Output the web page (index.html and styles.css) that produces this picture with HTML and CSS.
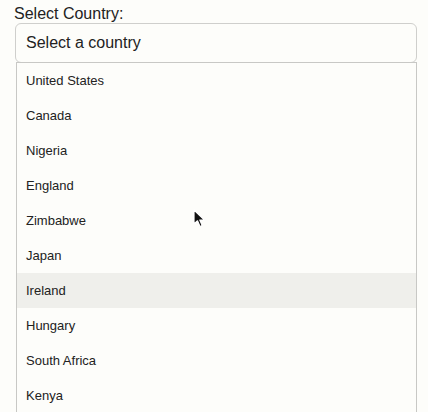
FILE: index.html
```html
<!DOCTYPE html>
<html>
<head>
<meta charset="utf-8">
<link rel="stylesheet" href="styles.css">
</head>
<body>
<div class="wrap">
  <label class="label">Select Country:</label>
  <div class="select">Select a country</div>
  <ul class="list">
    <li>United States</li>
    <li>Canada</li>
    <li>Nigeria</li>
    <li>England</li>
    <li>Zimbabwe</li>
    <li>Japan</li>
    <li class="hover">Ireland</li>
    <li>Hungary</li>
    <li>South Africa</li>
    <li>Kenya</li>
    <li>Ghana</li>
  </ul>
</div>
<svg class="cursor" width="14" height="20" viewBox="0 0 14 20">
  <path d="M1 1 L1 15 L4.5 11.8 L7 17.5 L9.2 16.5 L6.8 11 L11.5 11 Z" fill="#111" stroke="#fff" stroke-width="1.2" stroke-linejoin="round"/>
</svg>
</body>
</html>
```
FILE: styles.css
```css
html, body {
  margin: 0;
  padding: 0;
  background: #fdfdfa;
  overflow: hidden;
  height: 412px;
}
body {
  font-family: "Liberation Sans", Arial, sans-serif;
  color: #222;
  position: relative;
}
.wrap {
  padding: 4px 12px 0 14px;
  display: flex;
  flex-direction: column;
}
.label {
  font-size: 16px;
  line-height: 19px;
  color: #222;
}
.select {
  margin-left: 1px;
  width: 400px;
  height: 38px;
  border: 1px solid #cfcfcc;
  border-radius: 6px;
  box-sizing: content-box;
  font-size: 16px;
  line-height: 38px;
  padding-left: 10px;
  margin-top: 0;
  box-sizing: border-box;
  width: 402px;
  height: 40px;
}
.list {
  list-style: none;
  margin: -1px 0 0 2px;
  padding: 0;
  width: 401px;
  box-sizing: border-box;
  border: 1px solid #c8c8c5;
  border-bottom: none;
  background: #fdfdfa;
}
.list li {
  height: 35px;
  line-height: 35px;
  font-size: 13px;
  padding-left: 9px;
  color: #222;
}
.list li.hover {
  background: #efefeb;
}
.cursor {
  position: absolute;
  left: 193px;
  top: 209px;
}
```
